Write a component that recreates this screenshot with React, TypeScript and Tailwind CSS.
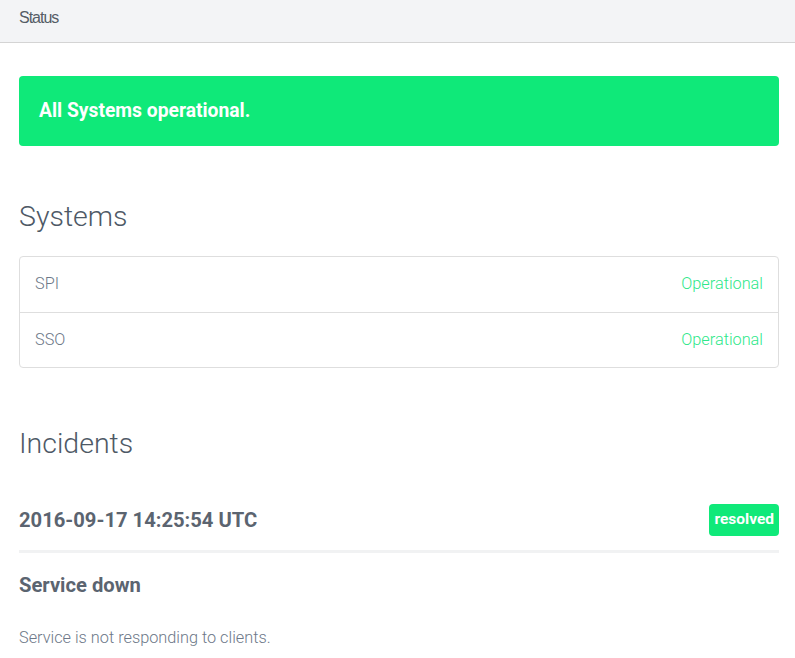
import React from "react";

export default function App() {
  const systems = ["SPI", "SSO"];
  return (
    <div className="min-h-screen bg-white" style={{ fontFamily: "Roboto, 'Liberation Sans', sans-serif" }}>
      <div className="h-[43px] bg-[#f3f4f6] border-b border-[#d4d4d4] flex items-start pt-[6px] px-[19px]">
        <span className="text-[16px] text-[#555c66] tracking-[-1px]" style={{ fontFamily: "'Liberation Sans', Arial, sans-serif" }}>Status</span>
      </div>
      <div className="pl-[19px] pr-[16px] pt-[33px]">
        <div className="h-[70px] bg-[#0fe979] rounded-[4px] flex items-center px-[20px]">
          <span className="text-white font-bold text-[19.3px]">All Systems operational.</span>
        </div>

        <h2 className="mt-[53px] text-[28.5px] font-light text-[#4e5966] leading-[36px]">Systems</h2>
        <div className="mt-[21px] border border-[#dedede] rounded-[4px]">
          {systems.map((s, i) => (
            <div key={s} className={"h-[55px] flex items-center justify-between px-[15px] " + (i > 0 ? "border-t border-[#dedede]" : "")}>
              <span className="text-[16.3px] font-light text-[#6d7888]">{s}</span>
              <span className="text-[16.3px] font-light text-[#2ee88a]">Operational</span>
            </div>
          ))}
        </div>

        <h2 className="mt-[58px] text-[28.5px] font-light text-[#4e5966] leading-[36px]">Incidents</h2>
        <div className="mt-[42px] flex items-center justify-between pb-[14px] border-b-[3px] border-[#f1f2f3]">
          <span className="text-[20.2px] font-bold text-[#5b6470]">2016-09-17 14:25:54 UTC</span>
          <span className="bg-[#0fe979] rounded-[4px] text-white font-bold text-[15.5px] h-[32px] px-[5px] flex items-center">resolved</span>
        </div>
        <div className="mt-[17px] text-[20.2px] font-bold text-[#5b6470]">Service down</div>
        <div className="mt-[26px] text-[16.3px] font-light text-[#6d7888]">Service is not responding to clients.</div>
      </div>
    </div>
  );
}
